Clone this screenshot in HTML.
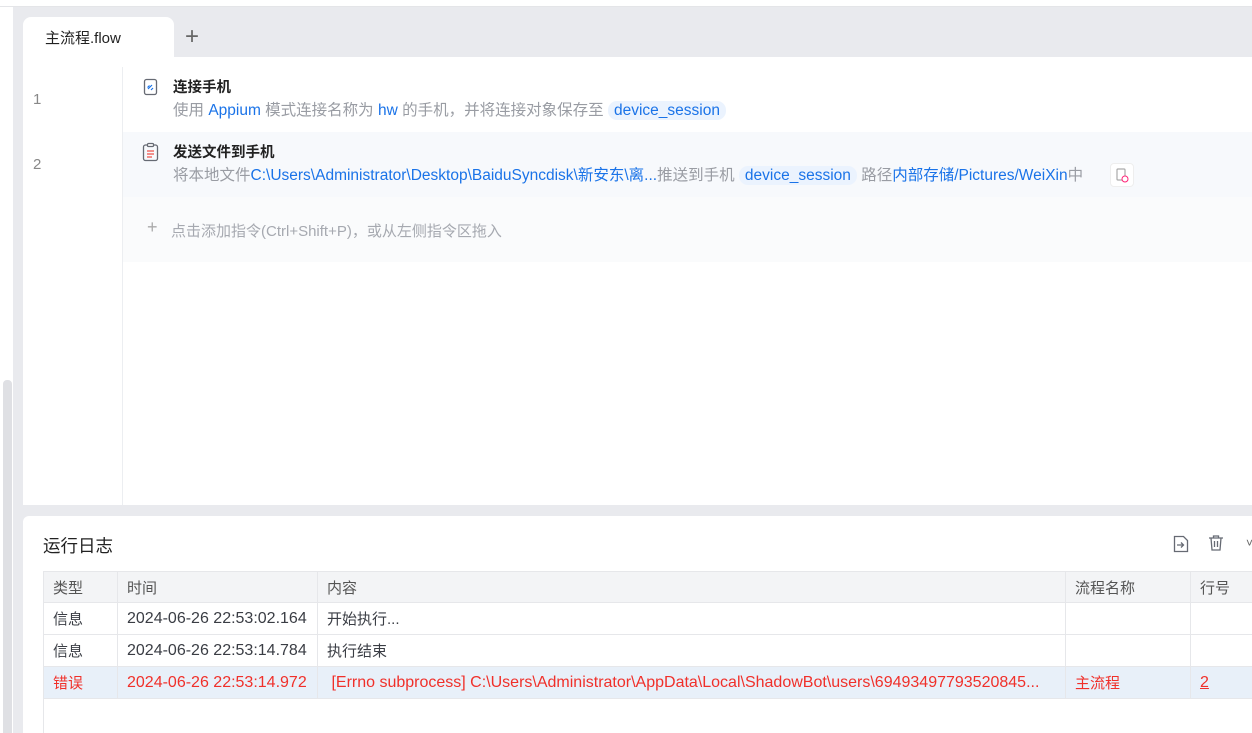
<!DOCTYPE html>
<html><head><meta charset="utf-8"><style>
*{margin:0;padding:0;box-sizing:border-box}
body{width:1252px;height:733px;overflow:hidden;background:#fff;font-family:"Liberation Sans","Noto Sans CJK SC",sans-serif;position:relative;color:#333}
.abs{position:absolute}
.b{color:#1a73e8}
.g{color:#999ca3}
.chip{background:#ebf3fe;color:#1a73e8;border-radius:9px;padding:1px 6px}
table{border-collapse:collapse;font-size:16px;table-layout:fixed}
td{border:1px solid #e6e7ea;height:32px;padding:0 9px;white-space:nowrap;overflow:hidden;color:#3a3d44}
tr.h td{background:#f3f4f6;height:31px;color:#555;font-size:15px}
tr.e td{background:#e8f0f9;color:#f0302a}
</style></head><body>
<div class="abs" style="left:0;top:6px;width:1252px;height:1px;background:#e4e5e8"></div>
<div class="abs" style="left:13px;top:7px;width:1239px;height:726px;background:#e9eaee"></div>
<div class="abs" style="left:3px;top:380px;width:9px;height:353px;background:#dfe0e4;border-radius:4px 4px 0 0"></div>
<div class="abs" style="left:23px;top:17px;width:151px;height:41px;background:#fff;border-radius:8px 8px 0 0;font-size:15px;padding:10px 0 0 22px;color:#222">主流程.flow</div>
<div class="abs" style="left:185px;top:23px;font-size:24px;color:#666;font-weight:300">+</div>
<div class="abs" style="left:23px;top:57px;width:1229px;height:448px;background:#fff"></div>
<div class="abs" style="left:122px;top:67px;width:1px;height:438px;background:#eceef1"></div>
<div class="abs g" style="left:33px;top:91px;font-size:15px;color:#888">1</div>
<div class="abs g" style="left:33px;top:156px;font-size:15px;color:#888">2</div>
<div class="abs" style="left:123px;top:132px;width:1129px;height:65px;background:#f7f9fc"></div>
<div class="abs" style="left:123px;top:197px;width:1129px;height:65px;background:#fafbfc"></div>
<svg class="abs" style="left:143px;top:78px" width="16" height="18"><rect x="1.5" y="1.5" width="12" height="15" rx="2" fill="none" stroke="#666a73" stroke-width="1.3"/><path d="M5 11l4-4M4.5 9.5l2-2M8 12l2-2" stroke="#1a73e8" stroke-width="1.2" fill="none"/></svg>
<div class="abs" style="left:173px;top:76px;font-size:14.5px;font-weight:bold;color:#222">连接手机</div>
<div class="abs g" style="left:173px;top:98px;font-size:15.5px;white-space:nowrap">使用 <span class="b">Appium</span> 模式连接名称为 <span class="b">hw</span> 的手机，并将连接对象保存至 <span class="chip">device_session</span></div>
<svg class="abs" style="left:142px;top:142px" width="18" height="20"><rect x="1.5" y="3" width="14" height="15.5" rx="2" fill="none" stroke="#666a73" stroke-width="1.3"/><rect x="5.5" y="1.5" width="6" height="3" rx="1" fill="#fff" stroke="#666a73" stroke-width="1.2"/><path d="M5 9h7M5 12h7M5 15h5" stroke="#f0524a" stroke-width="1.2"/></svg>
<div class="abs" style="left:173px;top:141px;font-size:14.5px;font-weight:bold;color:#222">发送文件到手机</div>
<div class="abs g" style="left:173px;top:163px;font-size:15.5px;white-space:nowrap">将本地文件<span class="b">C:\Users\Administrator\Desktop\BaiduSyncdisk\新安东\离...</span>推送到手机 <span class="chip">device_session</span> 路径<span class="b">内部存储/Pictures/WeiXin</span>中</div>
<div class="abs" style="left:1110px;top:163px;width:24px;height:24px;border:1px solid #eee;border-radius:4px;background:#fff"><svg width="22" height="22"><rect x="6" y="5" width="8" height="11" rx="1" fill="none" stroke="#aaa" stroke-width="1.2"/><circle cx="14" cy="15" r="3" fill="#fff" stroke="#f27" stroke-width="1"/></svg></div>
<div class="abs" style="left:147px;top:217px;font-size:18px;color:#aaa;font-weight:300">+</div>
<div class="abs" style="left:171px;top:220px;font-size:15px;color:#a6a9b0">点击添加指令(Ctrl+Shift+P)，或从左侧指令区拖入</div>
<div class="abs" style="left:23px;top:516px;width:1229px;height:217px;background:#fff;border-radius:6px 0 0 0"></div>
<div class="abs" style="left:43px;top:533px;font-size:17.5px;color:#222">运行日志</div>
<svg class="abs" style="left:1172px;top:535px" width="18" height="18"><path d="M2.5 1.5h9l4 4v11h-13z" fill="none" stroke="#666a73" stroke-width="1.3"/><path d="M5 10h6M9 7.5l2.5 2.5L9 12.5" fill="none" stroke="#666a73" stroke-width="1.3"/></svg>
<svg class="abs" style="left:1207px;top:534px" width="18" height="18"><path d="M2 4h14M6.5 4V2h5v2M4 4l1 12h8l1-12M7.5 7v6M10.5 7v6" fill="none" stroke="#666a73" stroke-width="1.3"/></svg>
<div class="abs" style="left:1246px;top:536px;font-size:12px;color:#666">˅</div>
<table class="abs" style="left:43px;top:571px;width:1230px">
<colgroup><col style="width:74px"><col style="width:200px"><col style="width:748px"><col style="width:125px"><col style="width:83px"></colgroup>
<tr class="h"><td>类型</td><td>时间</td><td>内容</td><td>流程名称</td><td>行号</td></tr>
<tr><td style="font-size:15px">信息</td><td>2024-06-26 22:53:02.164</td><td style="font-size:15px">开始执行...</td><td></td><td></td></tr>
<tr><td style="font-size:15px">信息</td><td>2024-06-26 22:53:14.784</td><td style="font-size:15px">执行结束</td><td></td><td></td></tr>
<tr class="e"><td style="font-size:15px">错误</td><td>2024-06-26 22:53:14.972</td><td>&nbsp;[Errno subprocess] C:\Users\Administrator\AppData\Local\ShadowBot\users\69493497793520845...</td><td style="font-size:15px">主流程</td><td><u>2</u></td></tr>
</table>
<div class="abs" style="left:43px;top:699px;width:1px;height:34px;background:#e6e7ea"></div>
</body></html>
